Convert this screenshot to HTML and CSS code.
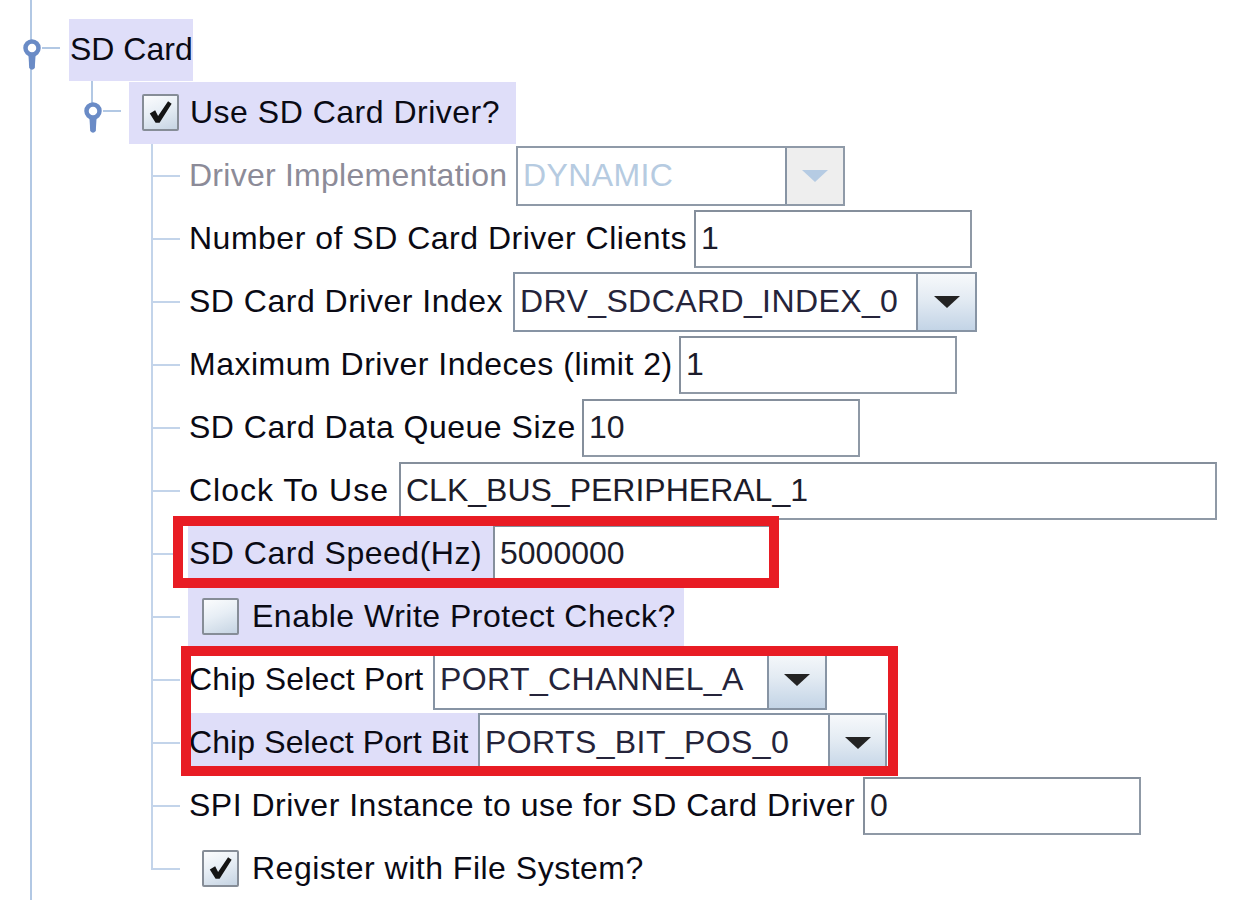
FILE: index.html
```html
<!DOCTYPE html>
<html>
<head>
<meta charset="utf-8">
<title>SD Card configuration</title>
<link rel="stylesheet" href="styles.css">
</head>
<body>
<div class="tree">
  <div class="row">
    <svg class="handle handle-root" viewBox="0 0 40 63" width="40" height="63">
      <line class="ln" x1="22" y1="30" x2="40" y2="30"/>
      <path class="stem" d="M8.3 34 H15.7 L14.8 50 Q12 53.5 9.2 50 Z"/>
      <circle class="ring" cx="12" cy="30" r="6.5"/>
    </svg>
    <span class="label hl hl-top w-sdcard">SD Card</span>
  </div>
  <div class="lvl1">
    <div class="row">
      <svg class="handle" viewBox="0 0 40 63" width="40" height="63">
        <line class="ln" x1="11" y1="0" x2="11" y2="24"/>
        <line class="ln" x1="22" y1="30" x2="40" y2="30"/>
        <path class="stem" d="M8.3 34 H15.7 L14.8 50 Q12 53.5 9.2 50 Z"/>
        <circle class="ring" cx="12" cy="30" r="6.5"/>
      </svg>
      <span class="label hl hl-top chk-label w-usesd">
        <span class="cb"><svg viewBox="0 0 37 37" width="33" height="33"><path d="M6.5 19.5 L12.5 16 L15.8 22.5 L27 6 L31 8.8 L17.5 30 L13 30 Z"/></svg></span>
        <span class="chk-text use-text">Use SD Card Driver?</span>
      </span>
    </div>
    <div class="lvl2">
      <div class="row">
        <span class="conn"></span>
        <span class="label disabled w-impl">Driver Implementation</span>
        <span class="combo combo-disabled w-combo-impl">
          <span class="combo-field cf-impl">DYNAMIC</span>
          <span class="combo-btn"><span class="tri"></span></span>
        </span>
      </div>
      <div class="row">
        <span class="conn"></span>
        <span class="label w-clients">Number of SD Card Driver Clients</span>
        <span class="field">1</span>
      </div>
      <div class="row">
        <span class="conn"></span>
        <span class="label w-index">SD Card Driver Index</span>
        <span class="combo w-combo-index">
          <span class="combo-field cf-index">DRV_SDCARD_INDEX_0</span>
          <span class="combo-btn"><span class="tri"></span></span>
        </span>
      </div>
      <div class="row">
        <span class="conn"></span>
        <span class="label w-max">Maximum Driver Indeces (limit 2)</span>
        <span class="field">1</span>
      </div>
      <div class="row">
        <span class="conn"></span>
        <span class="label w-queue">SD Card Data Queue Size</span>
        <span class="field">10</span>
      </div>
      <div class="row">
        <span class="conn"></span>
        <span class="label w-clock">Clock To Use</span>
        <span class="field field-wide">CLK_BUS_PERIPHERAL_1</span>
      </div>
      <div class="row">
        <span class="conn"></span>
        <span class="label hl w-speed">SD Card Speed(Hz)</span>
        <span class="field">5000000</span>
      </div>
      <div class="row">
        <span class="conn"></span>
        <span class="label hl chk-label w-wp">
          <span class="cb"></span>
          <span class="chk-text">Enable Write Protect Check?</span>
        </span>
      </div>
      <div class="row">
        <span class="conn"></span>
        <span class="label w-port">Chip Select Port</span>
        <span class="combo w-combo-port">
          <span class="combo-field cf-port">PORT_CHANNEL_A</span>
          <span class="combo-btn"><span class="tri"></span></span>
        </span>
      </div>
      <div class="row">
        <span class="conn"></span>
        <span class="label hl w-bit">Chip Select Port Bit</span>
        <span class="combo w-combo-bit">
          <span class="combo-field cf-bit">PORTS_BIT_POS_0</span>
          <span class="combo-btn"><span class="tri"></span></span>
        </span>
      </div>
      <div class="row">
        <span class="conn"></span>
        <span class="label w-spi">SPI Driver Instance to use for SD Card Driver</span>
        <span class="field">0</span>
      </div>
    </div>
    <div class="row row-last">
      <span class="elbow"></span>
      <span class="label chk-label w-wp">
        <span class="cb"><svg viewBox="0 0 37 37" width="33" height="33"><path d="M6.5 19.5 L12.5 16 L15.8 22.5 L27 6 L31 8.8 L17.5 30 L13 30 Z"/></svg></span>
        <span class="chk-text">Register with File System?</span>
      </span>
    </div>
  </div>
</div>
<div class="mark mark-speed"></div>
<div class="mark mark-chip"></div>
</body>
</html>
```

FILE: styles.css
```css
html, body {
  margin: 0;
  padding: 0;
  background: #ffffff;
  overflow: hidden;
}

body {
  position: relative;
  width: 1239px;
  height: 900px;
  font-family: "Liberation Sans", Arial, sans-serif;
  font-size: 32px;
  color: #0a0a14;
}

.tree {
  margin-left: 30px;
  border-left: 2px solid #b2c8e4;
  padding-top: 18px;
  height: 900px;
  box-sizing: border-box;
}

.row {
  display: flex;
  align-items: center;
  height: 63px;
}

.handle {
  flex: none;
  display: block;
}

.handle-root {
  margin-left: -12px;
}

.handle .ln {
  stroke: #b2c8e4;
  stroke-width: 2;
}

.handle .ring {
  fill: #ffffff;
  stroke: #6a8bc6;
  stroke-width: 4.5;
}

.handle .stem {
  fill: #6a8bc6;
}

.lvl1 {
  padding-left: 49px;
}

.lvl1 > .row > .handle + .label {
  margin-left: 8px;
}

.handle-root + .label {
  margin-left: 9px;
}

.lvl2 {
  margin-left: 70px;
  border-left: 2px solid #c3d4ea;
}

.conn {
  flex: none;
  width: 27px;
  height: 2px;
  background: #c3d4ea;
}

.row-last {
  margin-left: 70px;
}

.elbow {
  flex: none;
  align-self: flex-start;
  width: 27px;
  height: 31px;
  border-left: 2px solid #c3d4ea;
  border-bottom: 2px solid #c3d4ea;
}

.label {
  flex: none;
  display: flex;
  align-items: center;
  height: 60px;
  margin-left: 8px;
  padding-left: 1px;
  box-sizing: border-box;
  white-space: nowrap;
  letter-spacing: 0.5px;
}

.hl {
  background: #dfdef9;
}

.hl-top {
  height: 62px;
}

.disabled {
  color: #8c8b98;
  letter-spacing: 0.25px;
}

.chk-label {
  padding-left: 14px;
}

.w-usesd {
  padding-left: 13px;
}

.cb {
  flex: none;
  width: 37px;
  height: 37px;
  box-sizing: border-box;
  border: 2px solid #868d97;
  border-radius: 2px;
  background: linear-gradient(160deg, #fbfcfd 0%, #e7eef5 45%, #c6d4e3 100%);
  display: flex;
  align-items: center;
  justify-content: center;
}

.cb svg {
  display: block;
}

.cb svg path {
  fill: #141414;
}

.chk-text {
  margin-left: 13px;
}

.use-text {
  margin-left: 11px;
}

/* label widths (label start to the field that follows) */
.w-sdcard { width: 124px; letter-spacing: 0; }
.w-usesd { width: 387px; }
.w-impl { width: 328px; }
.w-clients { width: 506px; }
.w-index { width: 325px; }
.w-max { width: 491px; }
.w-queue { width: 394px; }
.w-clock { width: 211px; letter-spacing: 1px; }
.w-speed { width: 305px; }
.w-wp { width: 496px; }
.w-port { width: 245px; letter-spacing: 0.2px; }
.w-bit { width: 290px; letter-spacing: 0.1px; }
.w-spi { width: 675px; }

.field {
  flex: none;
  display: flex;
  align-items: center;
  width: 278px;
  height: 58px;
  box-sizing: border-box;
  border-top: 2px solid #858f9c;
  border-left: 2px solid #858f9c;
  border-right: 2px solid #8f99a6;
  border-bottom: 2px solid #8f99a6;
  background: #ffffff;
  padding-left: 5px;
  color: #1c1c2a;
  white-space: nowrap;
}

.field-wide {
  width: 818px;
}

.combo {
  flex: none;
  display: flex;
  height: 60px;
  box-sizing: border-box;
  border: 2px solid #8794a4;
  background: #ffffff;
}

.combo-field {
  flex: none;
  display: flex;
  align-items: center;
  box-sizing: border-box;
  border-right: 2px solid #8794a4;
  padding-left: 5px;
  color: #25243a;
  white-space: nowrap;
  letter-spacing: 0.4px;
}

.combo-btn {
  flex: 1;
  display: flex;
  align-items: center;
  justify-content: center;
  background: linear-gradient(to bottom, #f7f9fb 0%, #e3ebf3 45%, #c3d4e6 100%);
}

.tri {
  width: 0;
  height: 0;
  border-left: 13px solid transparent;
  border-right: 13px solid transparent;
  border-top: 12px solid #232323;
}

.w-combo-impl { width: 329px; }
.cf-impl { width: 269px; }
.w-combo-index { width: 464px; }
.cf-index { width: 403px; }
.w-combo-port { width: 394px; }
.cf-port { width: 334px; }
.w-combo-bit { width: 409px; }
.cf-bit { width: 350px; }

.combo-disabled {
  border-color: #8f9aa8;
}

.combo-disabled .combo-field {
  color: #b6cbe1;
}

.combo-disabled .combo-btn {
  background: #eeeeee;
}

.combo-disabled .tri {
  border-top-color: #b5cbe3;
}

.mark {
  position: absolute;
  box-sizing: border-box;
  border: 10px solid #e81c24;
}

.mark-speed {
  left: 173px;
  top: 516px;
  width: 606px;
  height: 72px;
}

.mark-chip {
  left: 181px;
  top: 646px;
  width: 717px;
  height: 130px;
}
```
